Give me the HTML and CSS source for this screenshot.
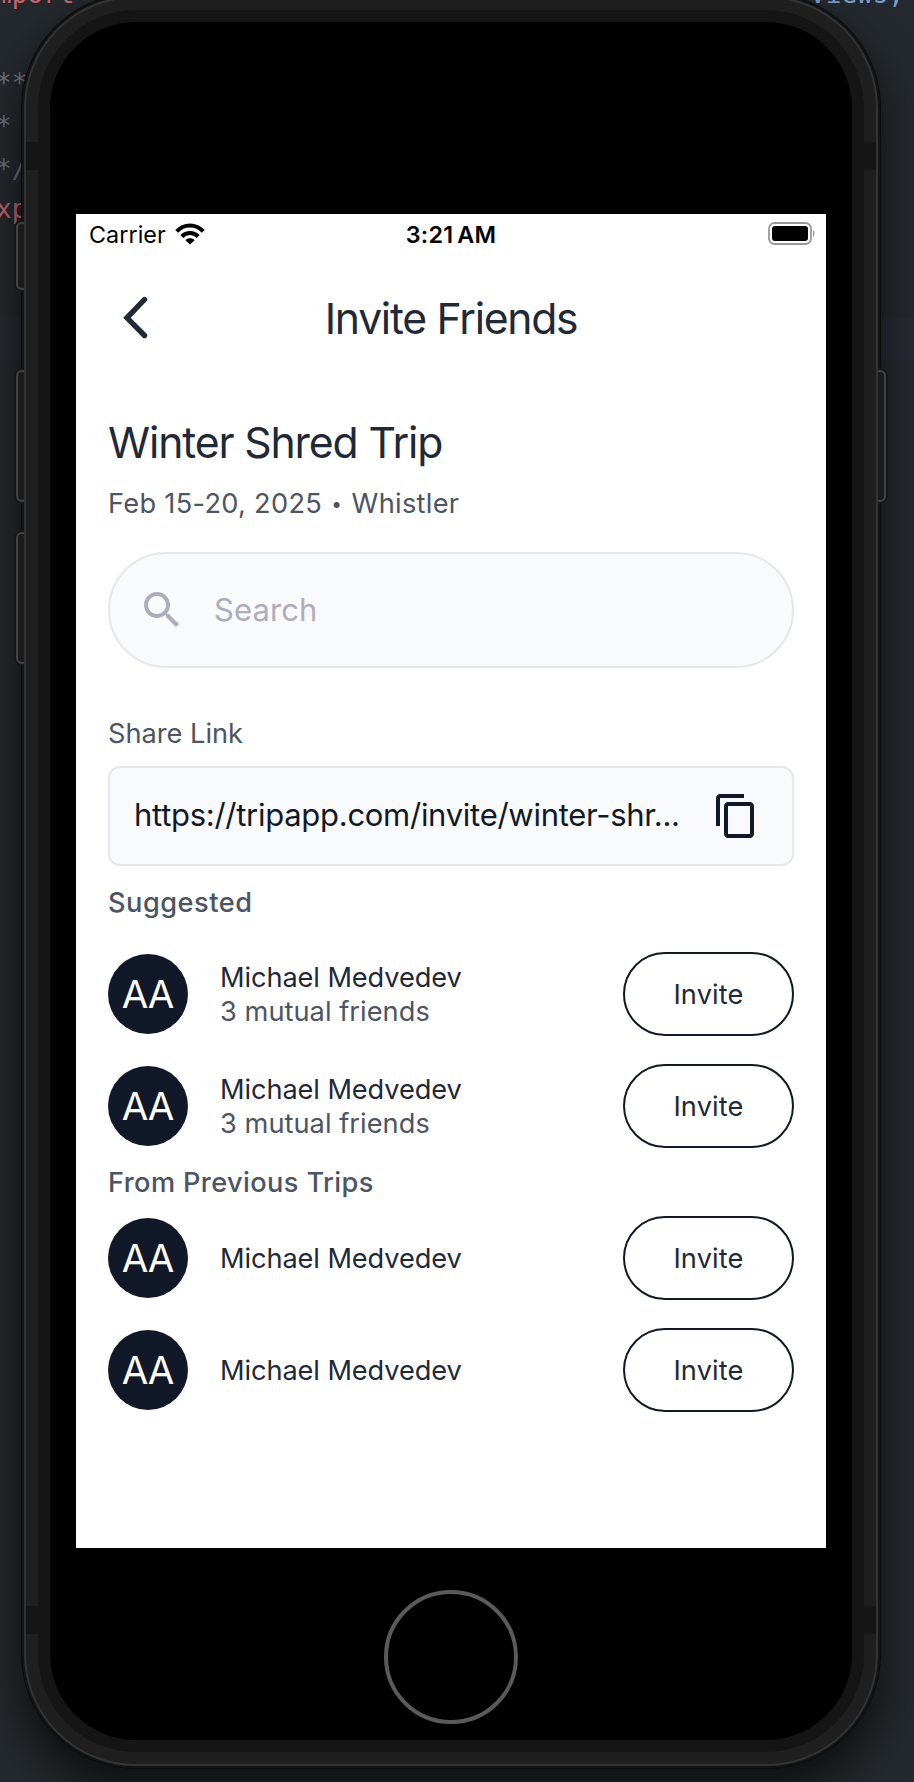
FILE: index.html
```
<!DOCTYPE html>
<html lang="en">
<head>
<meta charset="utf-8">
<title>Invite Friends</title>
<link rel="stylesheet" href="styles.css">
</head>
<body>
<div class="desktop">
  <div class="editor">
    <pre class="code"><span class="kw">mport</span> {                                           <span class="id">./Views,</span>

<span class="cm">**</span>
<span class="cm">*</span>
<span class="cm">*/</span>
<span class="kw">xp</span></pre>
    <div class="active-line"></div>
  </div>

  <div class="phone">
    <i class="key key-mute"></i><i class="key key-up"></i><i class="key key-down"></i><i class="key key-power"></i>
    <div class="frame">
      <i class="seam seam-tl"></i><i class="seam seam-tr"></i><i class="seam seam-bl"></i><i class="seam seam-br"></i>
      <div class="bezel">
        <div class="screen">
          <div class="status">
            <div class="status-left">
              <span>Carrier</span>
              <svg class="wifi" width="30" height="22" viewBox="0 0 30 22">
                <path fill="none" stroke="#000" stroke-width="4" d="M1.7 8.4C9 .4 21 .4 28.3 8.4M6.8 13.5C11.4 8.7 18.6 8.7 23.2 13.5"/>
                <path d="M15 21.5l-4.6-4.3c2.4-2.5 6.8-2.5 9.2 0z"/>
              </svg>
            </div>
            <span class="clock">3:21<b class="ampm">AM</b></span>
            <svg class="battery" width="47" height="23" viewBox="0 0 47 23">
              <rect x="1" y="1" width="42" height="21" rx="5.5" fill="none" stroke="#999" stroke-width="1.8"/>
              <rect x="4" y="4" width="36" height="15" rx="3"/>
              <path fill="#999" d="M45 8c2 1.200 2 6 0 7.200z"/>
            </svg>
          </div>

          <header class="header">
            <svg class="back" width="26" height="44" viewBox="0 0 26 44"><path fill="none" stroke="#1f2937" stroke-width="5.4" stroke-linecap="round" d="M21.500 3.500L4 21.800 21.500 39.500"/></svg>
            <h1 class="title">Invite Friends</h1>
          </header>

          <main class="main">
            <h2 class="trip">Winter Shred Trip</h2>
            <p class="meta">Feb 15-20, 2025 <span class="dot">•</span> Whistler</p>

            <div class="search">
              <svg width="48" height="48" viewBox="0 0 24 24"><path fill="#afadbc" d="M15.500 14h-.79l-.28-.27C15.410 12.590 16 11.110 16 9.500 16 5.910 13.090 3 9.500 3S3 5.910 3 9.500 5.910 16 9.500 16c1.610 0 3.090-.59 4.230-1.570l.27.28v.79l5 4.990L20.490 19l-4.990-5zm-6 0C7.010 14 5 11.990 5 9.500S7.010 5 9.500 5 14 7.010 14 9.500 11.990 14 9.500 14z"/></svg>
              <span class="placeholder">Search</span>
            </div>

            <p class="label">Share Link</p>
            <div class="link">
              <span class="url">https://tripapp.com/invite/winter-shr...</span>
              <svg width="48" height="48" viewBox="0 0 24 24"><path fill="#111827" d="M16 1H4c-1.100 0-2 .9-2 2v14h2V3h12V1zm3 4H8c-1.100 0-2 .9-2 2v14c0 1.100.9 2 2 2h11c1.100 0 2-.9 2-2V7c0-1.100-.9-2-2-2zm0 16H8V7h11v14z"/></svg>
            </div>

            <h3 class="section">Suggested</h3>
            <div class="list list-suggested">
              <div class="row"><span class="avatar">AA</span><div class="who"><span class="name">Michael Medvedev</span><span class="mutual">3 mutual friends</span></div><button class="invite">Invite</button></div>
              <div class="row"><span class="avatar">AA</span><div class="who"><span class="name">Michael Medvedev</span><span class="mutual">3 mutual friends</span></div><button class="invite">Invite</button></div>
            </div>

            <h3 class="section section-prev">From Previous Trips</h3>
            <div class="list">
              <div class="row"><span class="avatar">AA</span><div class="who"><span class="name">Michael Medvedev</span></div><button class="invite">Invite</button></div>
              <div class="row"><span class="avatar">AA</span><div class="who"><span class="name">Michael Medvedev</span></div><button class="invite">Invite</button></div>
            </div>
          </main>
        </div>
        <div class="home"></div>
      </div>
    </div>
  </div>
</div>
</body>
</html>
```
FILE: styles.css
```
* { box-sizing: border-box; margin: 0; padding: 0; }
body { font-family: Inter, "Liberation Sans", sans-serif; background: #24292d; }
svg { display: block; flex: none; }

.desktop {
  display: grid;
  width: 914px;
  height: 1782px;
  overflow: hidden;
  background: #24292d;
}
.editor, .phone { grid-area: 1 / 1; }

/* editor behind the simulator */
.editor { display: flex; flex-direction: column; height: 1782px; }
.code {
  flex: none;
  height: 344px;
  margin: -27px 0 0 -3.9px;
  font: 26px/43px "DejaVu Sans Mono", monospace;
  color: #a9b2c3;
  white-space: pre;
}
.kw { color: #c1666f; }
.cm { position: relative; top: 3px; color: #6b717c; }
.id { color: #7c9cc9; }
.active-line { height: 43px; background: #272a31; }

/* device */
.phone {
  position: relative;
  width: 854px;
  height: 1770px;
  margin: -4px 0 0 24px;
  border-radius: 112px;
  box-shadow: 0 0 0 2px #141515, 0 0 0 3px #0a0b0b, 0 24px 44px 4px rgba(0, 0, 0, .6);
}
.key {
  position: absolute;
  width: 12px;
  border: 2px solid #434343;
  border-radius: 7px;
  background: #1b1b1b;
  box-shadow: 0 0 0 2px #15181a;
}
.key-mute { left: -8px; top: 226px; height: 68px; }
.key-up { left: -8px; top: 374px; height: 132px; }
.key-down { left: -8px; top: 536px; height: 132px; }
.key-power { right: -8px; top: 374px; height: 132px; }

.frame {
  position: relative;
  height: 100%;
  padding: 12px;
  border: 2px solid #333;
  border-radius: 112px;
  background: #1f1f1f;
}
.seam { position: absolute; width: 12px; height: 28px; background: #151515; }
.seam-tl, .seam-bl { left: 0; }
.seam-tr, .seam-br { right: 0; }
.seam-tl, .seam-tr { top: 144px; }
.seam-bl, .seam-br { top: 1608px; }
.bezel {
  display: flex;
  flex-direction: column;
  align-items: center;
  height: 100%;
  padding-top: 192px;
  border: 12px solid #151515;
  border-radius: 98px;
  background: #000;
}
.screen { flex: none; width: 750px; height: 1334px; background: #fff; }
.home {
  flex: none;
  width: 134px;
  height: 134px;
  margin-top: 42px;
  border: 4px solid #5a5a5a;
  border-radius: 50%;
}

/* status bar */
.status {
  display: grid;
  grid-template-columns: 1fr auto 1fr;
  align-items: center;
  height: 41px;
  padding: 0 11px 0 13px;
  font-size: 23.3px;
  line-height: 41px;
  color: #000;
}
.status-left { display: flex; align-items: center; gap: 9px; letter-spacing: .07px; }
.wifi { margin-top: -1px; }
.clock { margin-left: -2px; font-weight: 600; letter-spacing: .25px; }
.ampm { margin-left: 4px; font-weight: 600; }
.battery { justify-self: end; margin-top: -2px; }

/* header */
.header {
  display: grid;
  grid-template-columns: 48px 1fr 48px;
  align-items: center;
  height: 127px;
  padding: 0 47px;
}
.back { margin-top: -1px; }
.title {
  font-size: 42.7px;
  line-height: 52px;
  font-weight: 400;
  letter-spacing: -1.28px;
  text-align: center;
  color: #1f2937;
}

.main { padding: 35px 32px 0; }
.trip { font-size: 42.7px; line-height: 51px; font-weight: 400; letter-spacing: -1.13px; color: #1f2937; }
.meta { height: 40px; margin-top: 16px; font-size: 27.2px; line-height: 40px; letter-spacing: .3px; color: #4b5563; }
.dot { display: inline-block; width: 13.5px; font-size: 19px; line-height: 20px; text-align: center; vertical-align: 2px; }

.search {
  display: flex;
  align-items: center;
  gap: 28px;
  height: 116px;
  margin-top: 28px;
  padding: 0 28px;
  border: 2px solid #e5e7eb;
  border-radius: 58px;
  background: #f9fafb;
}
.placeholder { font-size: 31px; line-height: 40px; letter-spacing: .1px; color: #afadbc; }

.label { margin-top: 46px; font-size: 27.2px; line-height: 40px; color: #4b5563; }
.link {
  display: flex;
  align-items: center;
  justify-content: space-between;
  height: 100px;
  margin-top: 12px;
  padding: 0 32px 0 24px;
  border: 2px solid #e5e7eb;
  border-radius: 12px;
  background: #f9fafb;
}
.url { padding-bottom: 2px; font-size: 31px; line-height: 40px; letter-spacing: -.28px; white-space: nowrap; color: #111827; }

.section { margin-top: 17px; font-size: 27.2px; line-height: 40px; font-weight: 500; letter-spacing: .5px; color: #4b5563; }
.section-prev { margin-top: 15px; letter-spacing: .38px; }
.list { display: flex; flex-direction: column; gap: 28px; margin-top: 13px; }
.list-suggested { margin-top: 29px; }
.row { display: flex; align-items: center; height: 84px; }
.avatar {
  flex: none;
  width: 80px;
  height: 80px;
  border-radius: 50%;
  background: #111827;
  color: #fff;
  font-size: 38.5px;
  line-height: 80px;
  letter-spacing: -1.2px;
  text-indent: -1px;
  text-align: center;
}
.who { display: flex; flex: 1; flex-direction: column; margin-left: 32px; padding-top: 2px; font-size: 27.2px; line-height: 34px; }
.name { letter-spacing: -.09px; color: #1f2937; }
.mutual { letter-spacing: .05px; color: #4b5563; }
.invite {
  width: 171px;
  height: 84px;
  padding-top: 2px;
  border: 2px solid #111827;
  border-radius: 42px;
  background: #fff;
  font: 27.2px/40px Inter, sans-serif;
  letter-spacing: .15px;
  color: #1f2937;
}
```
